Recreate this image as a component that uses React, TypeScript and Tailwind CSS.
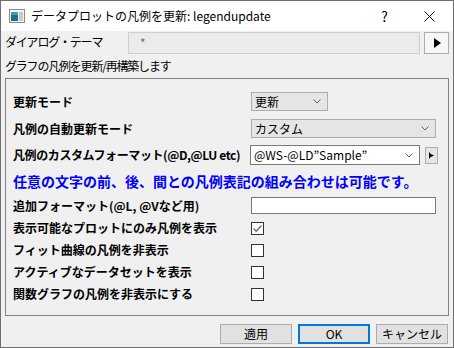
import React from "react";

const jp = { fontFamily: '"Noto Sans CJK JP", "Noto Sans", sans-serif' };

function Chevron() {
  return (
    <svg width="8" height="5" viewBox="0 0 8 5" className="shrink-0">
      <path d="M0.5 0.5 L4 4 L7.5 0.5" fill="none" stroke="#606060" strokeWidth="1" />
    </svg>
  );
}

function Select({ value, width }: { value: string; width: string }) {
  return (
    <div className={`flex h-[19px] ${width} items-center justify-between border border-[#adadad] bg-[#e5e5e5] pl-[3px] pr-[6px] text-[12px] text-black`}>
      <span>{value}</span>
      <Chevron />
    </div>
  );
}

function Check({ checked }: { checked?: boolean }) {
  return (
    <div className="flex h-[13px] w-[13px] items-center justify-center border border-[#333333] bg-white">
      {checked ? (
        <svg width="11" height="11" viewBox="0 0 11 11">
          <path d="M1.5 5.5 L4.2 8.2 L9.5 2.5" fill="none" stroke="#6b6b6b" strokeWidth="1.3" />
        </svg>
      ) : null}
    </div>
  );
}

const checks = [
  { label: "表示可能なプロットにのみ凡例を表示", checked: true },
  { label: "フィット曲線の凡例を非表示", checked: false },
  { label: "アクティブなデータセットを表示", checked: false },
  { label: "関数グラフの凡例を非表示にする", checked: false },
];

export default function App() {
  return (
    <div style={jp} className="flex h-[348px] w-[454px] flex-col border border-[#6e6e6e] bg-[#f0f0f0] text-black">
      {/* title bar */}
      <div className="flex h-[30px] items-center bg-white">
        <svg width="16" height="14" viewBox="0 0 16 14" className="ml-[8px]">
          <rect x="0.5" y="0.5" width="15" height="13" fill="#f4f4f4" stroke="#8a8a8a" />
          <rect x="2" y="3" width="7" height="9" fill="#1f6f8b" />
          <rect x="2" y="3" width="7" height="3" fill="#4a9bb5" />
          <rect x="10" y="3" width="4" height="9" fill="#c8c8c8" />
        </svg>
        <span className="ml-[6px] text-[12px]">データプロットの凡例を更新: legendupdate</span>
        <span className="ml-auto mr-[36px] text-[14px]">?</span>
        <svg width="11" height="11" viewBox="0 0 11 11" className="mr-[18px]">
          <path d="M0.5 0.5 L10.5 10.5 M10.5 0.5 L0.5 10.5" stroke="#111" strokeWidth="1" />
        </svg>
      </div>

      {/* dialog theme */}
      <div className="mt-[1px] flex h-[22px] items-start pl-[4px] pr-[4px]">
        <span className="mt-[1px] w-[123px] text-[12px] tracking-[-1.2px]">ダイアログ・テーマ</span>
        <div className="flex h-[22px] w-[292px] items-center border border-[#cfcfcf] bg-[#ebebeb] pl-[11px] text-[12px] text-[#6d6d6d]">
          *
        </div>
        <div className="ml-auto flex h-[22px] w-[25px] items-center justify-center border border-[#adadad] bg-[#f7f7f7]">
          <svg width="8" height="10" viewBox="0 0 8 10">
            <path d="M1 0 L8 5 L1 10 Z" fill="#000" />
          </svg>
        </div>
      </div>

      <div className="flex h-[24px] items-center pl-[4px] text-[12px] tracking-[-1.2px]">
        グラフの凡例を更新/再構築します
      </div>

      {/* group */}
      <div className="mx-[4px] flex h-[238px] flex-col border border-[#828282] pl-[7px] pt-[9px]">
        <div className="flex h-[27px] items-center">
          <span className="w-[238px] text-[12px] font-bold">更新モード</span>
          <Select value="更新" width="w-[77px]" />
        </div>
        <div className="flex h-[27px] items-center">
          <span className="w-[238px] text-[12px] font-bold">凡例の自動更新モード</span>
          <Select value="カスタム" width="w-[185px]" />
        </div>
        <div className="flex h-[26px] items-center">
          <span className="w-[237px] whitespace-nowrap text-[12px] font-bold tracking-[-0.4px]">凡例のカスタムフォーマット(@D,@LU etc)</span>
          <div className="flex h-[20px] w-[170px] items-center justify-between border border-[#7a7a7a] bg-white pl-[3px] pr-[6px] text-[12px]">
            <span>@WS-@LD”Sample”</span>
            <Chevron />
          </div>
          <div className="ml-[5px] flex h-[17px] w-[13px] items-center justify-center border border-[#adadad] bg-[#e5e5e5]">
            <svg width="7" height="7" viewBox="0 0 7 7">
              <path d="M1.5 0.5 V6.5" stroke="#000" strokeWidth="1" />
              <path d="M2 1.5 L6 3.5 L2 5.5 Z" fill="#000" />
            </svg>
          </div>
        </div>
        <div className="flex h-[26px] items-center text-[14px] font-bold text-[#0000ff]">
          任意の文字の前、後、間との凡例表記の組み合わせは可能です。
        </div>
        <div className="flex h-[23px] items-center">
          <span className="w-[238px] text-[12px] font-bold">追加フォーマット(@L, @Vなど用)</span>
          <div className="h-[17px] w-[185px] border border-[#7a7a7a] bg-white" />
        </div>
        {checks.map((c) => (
          <div key={c.label} className="flex h-[22px] items-center">
            <span className="w-[238px] text-[12px] font-bold">{c.label}</span>
            <Check checked={c.checked} />
          </div>
        ))}
      </div>

      {/* buttons */}
      <div className="mt-[8px] flex justify-end gap-[6px] pr-[5px]">
        <button className="flex h-[20px] w-[72px] items-center justify-center border border-[#adadad] bg-[#e1e1e1] text-[12px]">
          適用
        </button>
        <button className="flex h-[20px] w-[72px] items-center justify-center border-2 border-[#0078d7] bg-[#e1e1e1] text-[12px]">
          OK
        </button>
        <button className="flex h-[20px] w-[72px] items-center justify-center border border-[#adadad] bg-[#e1e1e1] text-[12px]">
          キャンセル
        </button>
      </div>
    </div>
  );
}
